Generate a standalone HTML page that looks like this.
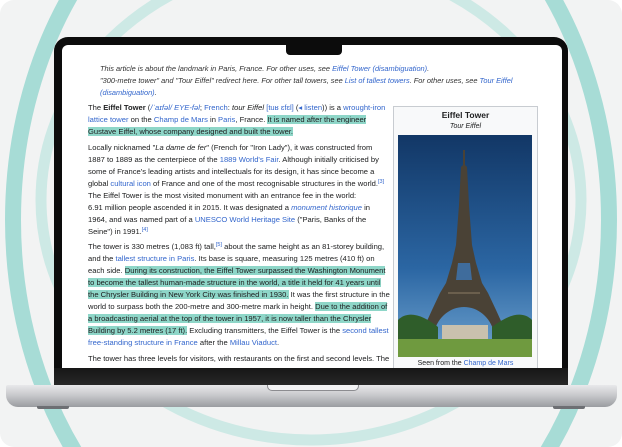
<!DOCTYPE html>
<html><head><meta charset="utf-8"><style>
*{margin:0;padding:0;box-sizing:border-box}
html,body{width:622px;height:447px;overflow:hidden}
body{background:#fff;font-family:"Liberation Sans",sans-serif;position:relative}
.card{position:absolute;left:0;top:0;width:622px;height:447px;border-radius:14px;background:#f2f3f3;overflow:hidden}
.bezel{position:absolute;left:54px;top:37px;width:514px;height:350px;background:#0c0c0c;border-radius:14px 14px 0 0}
.screen{position:absolute;left:62px;top:45px;width:500px;height:323px;background:#fff;border-radius:6px 6px 0 0;overflow:hidden}
.notch{position:absolute;left:286px;top:44px;width:56px;height:11px;background:#0c0c0c;border-radius:0 0 4px 4px}
.chin{position:absolute;left:54px;top:368px;width:514px;height:19px;background:linear-gradient(#161616,#2a2a2a)}
.base{position:absolute;left:6px;top:385px;width:611px;height:22px;border-radius:2px 2px 12px 12px;background:linear-gradient(#e8e8ea,#c9cacd 45%,#9a9ca0)}
.lip{position:absolute;left:267px;top:385px;width:92px;height:6px;background:#f4f4f5;border-radius:0 0 5px 5px;border:1px solid #8c8c90;border-top:none}
.foot{position:absolute;top:406px;width:32px;height:3px;background:#6d6f73;border-radius:0 0 2px 2px}
.t{position:absolute;font-size:7.6px;color:#202122;white-space:nowrap;line-height:12px;height:12px}
.hn{font-size:7.4px}
.i{font-style:italic}
a{color:#3366cc;text-decoration:none}
.h{background:#8ed6c8}
b{font-weight:bold}
sup{font-size:5.5px;position:relative;top:-3px;vertical-align:baseline;line-height:0;color:#3366cc}
.ib{position:absolute;left:331px;top:61px;width:145px;height:270px;background:#f8f9fa;border:1px solid #c8ccd1}
</style></head><body>
<div class="card">
<svg width="622" height="447" style="position:absolute;left:0;top:0;display:block">
<ellipse cx="311" cy="220" rx="298" ry="380" fill="none" stroke="#a7dcd6" stroke-width="16"/>
<ellipse cx="311" cy="200" rx="270" ry="240" fill="none" stroke="#cde9e5" stroke-width="11"/>
</svg>
</div>
<div class="bezel"></div>
<div class="screen">
<div class="t i hn" style="left:38px;top:18px;color:#333">This article is about the landmark in Paris, France. For other uses, see <a>Eiffel Tower (disambiguation)</a>.</div>
<div class="t i hn" style="left:38px;top:30px;color:#333">"300-metre tower" and "Tour Eiffel" redirect here. For other tall towers, see <a>List of tallest towers</a>. For other uses, see <a>Tour Eiffel</a></div>
<div class="t i hn" style="left:38px;top:42px"><a>(disambiguation)</a>.</div>

<div class="t" style="left:26px;top:57px">The <b>Eiffel Tower</b> (<a class="i">/ˈaɪfəl/ EYE-fəl</a>; <a>French</a>: <i>tour Eiffel</i> <a>[tuʁ ɛfɛl]</a> (<a>◂ listen</a>)) is a <a>wrought-iron</a></div>
<div class="t" style="left:26px;top:69px"><a>lattice tower</a> on the <a>Champ de Mars</a> in <a>Paris</a>, France. <span class="h">It is named after the engineer</span></div>
<div class="t" style="left:26px;top:81px"><span class="h">Gustave Eiffel, whose company designed and built the tower.</span></div>

<div class="t" style="left:26px;top:97px">Locally nicknamed "<i>La dame de fer</i>" (French for "Iron Lady"), it was constructed from</div>
<div class="t" style="left:26px;top:109px">1887 to 1889 as the centerpiece of the <a>1889 World's Fair</a>. Although initially criticised by</div>
<div class="t" style="left:26px;top:121px">some of France's leading artists and intellectuals for its design, it has since become a</div>
<div class="t" style="left:26px;top:133px">global <a>cultural icon</a> of France and one of the most recognisable structures in the world.<sup>[3]</sup></div>
<div class="t" style="left:26px;top:145px">The Eiffel Tower is the most visited monument with an entrance fee in the world:</div>
<div class="t" style="left:26px;top:157px">6.91 million people ascended it in 2015. It was designated a <a class="i">monument historique</a> in</div>
<div class="t" style="left:26px;top:169px">1964, and was named part of a <a>UNESCO World Heritage Site</a> ("Paris, Banks of the</div>
<div class="t" style="left:26px;top:181px">Seine") in 1991.<sup>[4]</sup></div>

<div class="t" style="left:26px;top:196px">The tower is 330 metres (1,083 ft) tall,<sup>[5]</sup> about the same height as an 81-storey building,</div>
<div class="t" style="left:26px;top:208px">and the <a>tallest structure in Paris</a>. Its base is square, measuring 125 metres (410 ft) on</div>
<div class="t" style="left:26px;top:220px">each side. <span class="h">During its construction, the Eiffel Tower surpassed the Washington Monument</span></div>
<div class="t" style="left:26px;top:232px"><span class="h">to become the tallest human-made structure in the world, a title it held for 41 years until</span></div>
<div class="t" style="left:26px;top:244px"><span class="h">the Chrysler Building in New York City was finished in 1930.</span> It was the first structure in the</div>
<div class="t" style="left:26px;top:256px">world to surpass both the 200-metre and 300-metre mark in height. <span class="h">Due to the addition of</span></div>
<div class="t" style="left:26px;top:268px"><span class="h">a broadcasting aerial at the top of the tower in 1957, it is now taller than the Chrysler</span></div>
<div class="t" style="left:26px;top:280px"><span class="h">Building by 5.2 metres (17 ft).</span> Excluding transmitters, the Eiffel Tower is the <a>second tallest</a></div>
<div class="t" style="left:26px;top:292px"><a>free-standing structure in France</a> after the <a>Millau Viaduct</a>.</div>
<div class="t" style="left:26px;top:308px">The tower has three levels for visitors, with restaurants on the first and second levels. The</div>

<div class="ib">
<div style="position:absolute;left:0;width:143px;top:3px;text-align:center;font-size:8.5px;font-weight:bold;color:#202122">Eiffel Tower</div>
<div style="position:absolute;left:0;width:143px;top:16px;text-align:center;font-size:7px;font-style:italic;color:#202122">Tour Eiffel</div>
<svg style="position:absolute;left:4px;top:28px" width="134" height="222" viewBox="0 0 134 222">
<defs><linearGradient id="sky" x1="0" y1="0" x2="0" y2="1"><stop offset="0" stop-color="#123766"/><stop offset="0.6" stop-color="#2b66a3"/><stop offset="1" stop-color="#6fa3cf"/></linearGradient></defs>
<rect width="134" height="222" fill="url(#sky)"/>
<path d="M65 15 L67 15 L67 30 L69 32 L71 70 L74 110 L78 128 L84 148 L90 158 L98 175 L108 197 L96 197 C92 182 80 172 66 172 C52 172 40 182 36 197 L24 197 L34 175 L42 158 L48 148 L54 128 L58 110 L61 70 L63 32 L65 30 Z" fill="#4a4236"/>
<path d="M60 128 L72 128 L74 145 L58 145 Z" fill="#3f6c9c"/>
<path d="M50 158 L82 158" stroke="#6b5f4d" stroke-width="2"/>
<path d="M0 185 C10 175 25 180 40 192 L40 210 L0 210 Z" fill="#2f5d2a"/>
<path d="M134 185 C124 175 110 180 94 192 L94 210 L134 210 Z" fill="#2f5d2a"/>
<rect x="44" y="190" width="46" height="14" fill="#c9c1ae"/>
<rect y="204" width="134" height="18" fill="#6f9a3f"/>
</svg>
<div style="position:absolute;left:0;width:143px;top:253px;text-align:center;font-size:7px;color:#202122">Seen from the <a>Champ de Mars</a></div>
</div>
</div>
<div class="notch"></div>
<div class="chin"></div>
<div class="base"></div>
<div class="lip"></div>
<div class="foot" style="left:37px"></div>
<div class="foot" style="left:553px"></div>
</body></html>
